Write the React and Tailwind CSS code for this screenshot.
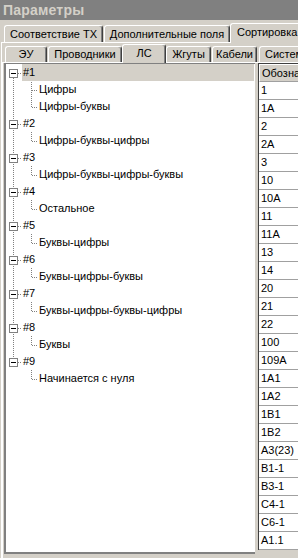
import React from "react";

const groups = [
  { label: "#1", items: ["Цифры", "Цифры-буквы"] },
  { label: "#2", items: ["Цифры-буквы-цифры"] },
  { label: "#3", items: ["Цифры-буквы-цифры-буквы"] },
  { label: "#4", items: ["Остальное"] },
  { label: "#5", items: ["Буквы-цифры"] },
  { label: "#6", items: ["Буквы-цифры-буквы"] },
  { label: "#7", items: ["Буквы-цифры-буквы-цифры"] },
  { label: "#8", items: ["Буквы"] },
  { label: "#9", items: ["Начинается с нуля"] },
];

const codes = [
  "1", "1A", "2", "2A", "3", "10", "10A", "11", "11A", "13", "14", "20", "21",
  "22", "100", "109A", "1A1", "1A2", "1B1", "1B2", "A3(23)", "B1-1", "B3-1",
  "C4-1", "C6-1", "A1.1",
];

const outerTabs = [
  { label: "Соответствие ТХ", cls: "ml-[4px] w-[99px] justify-center" },
  { label: "Дополнительные поля", cls: "ml-[1px] w-[126px] justify-center" },
  { label: "Сортировка", cls: "w-[72px] justify-start pl-[6px]", active: true },
];

const innerTabs = [
  { label: "ЭУ", cls: "ml-[3px] w-[42px] justify-center" },
  { label: "Проводники", cls: "ml-[1px] w-[74px] justify-center" },
  { label: "ЛС", cls: "w-[44px] justify-center", active: true },
  { label: "Жгуты", cls: "w-[45px] justify-center" },
  { label: "Кабели", cls: "ml-[1px] w-[45px] justify-center" },
  { label: "Системы", cls: "ml-[2px] w-[60px] justify-start pl-[5px]" },
];

function buildRows() {
  const rows = [];
  groups.forEach((g, gi) => {
    const last = gi === groups.length - 1;
    rows.push({ kind: "group", label: g.label, first: gi === 0, last, selected: gi === 0 });
    g.items.forEach((it, ii) => {
      rows.push({ kind: "item", label: it, parentLast: last, lastChild: ii === g.items.length - 1 });
    });
  });
  return rows;
}

const DOT = { stroke: "#808080", strokeWidth: 1, strokeDasharray: "1 1" };

function Glyph({ row, index }) {
  // keep the dots on the same pixel grid from row to row
  const phase = (17 * index) % 2;
  if (row.kind === "group") {
    return (
      <svg width="15" height="17" className="shrink-0">
        {!row.first && <line x1="6.5" y1="0" x2="6.5" y2="5" {...DOT} strokeDashoffset={phase} />}
        {!row.last && <line x1="6.5" y1="14" x2="6.5" y2="17" {...DOT} strokeDashoffset={phase} />}
        <line x1="11" y1="9.5" x2="15" y2="9.5" {...DOT} />
        <rect x="2.5" y="5.5" width="8" height="8" fill="#fff" stroke="#808080" />
        <line x1="4" y1="9.5" x2="9" y2="9.5" stroke="#000" />
      </svg>
    );
  }
  return (
    <svg width="31" height="17" className="shrink-0">
      {!row.parentLast && <line x1="6.5" y1="0" x2="6.5" y2="17" {...DOT} strokeDashoffset={phase} />}
      <line x1="24.5" y1="0" x2="24.5" y2={row.lastChild ? 10 : 17} {...DOT} strokeDashoffset={phase} />
      <line x1="25" y1="9.5" x2="31" y2="9.5" {...DOT} />
    </svg>
  );
}

function Tab({ tab, tall, short }) {
  return (
    <div
      className={`${tab.cls} shrink-0 flex items-center bg-[#d4d0c8] border-t border-l border-white border-r border-r-[#404040] rounded-t-[3px] shadow-[inset_-1px_0_0_#808080] whitespace-nowrap overflow-hidden ${
        tab.active ? `${tall} relative z-10 -mb-px` : short
      }`}
    >
      {tab.label}
    </div>
  );
}

export default function App() {
  const rows = buildRows();

  return (
    <div className="w-[298px] h-[558px] overflow-hidden bg-[#d4d0c8] flex flex-col font-['Liberation_Sans',Arial,sans-serif] text-[11px] text-black">
      {/* caption */}
      <div className="h-[20px] shrink-0 bg-[#808080] text-[#d4d0c8] font-bold text-[14px] tracking-[0.2px] leading-[20px] pl-[3px]">
        Параметры
      </div>

      {/* outer tabs */}
      <div className="h-[22px] shrink-0 flex items-end">
        {outerTabs.map((t) => (
          <Tab key={t.label} tab={t} tall="h-[20px] pb-[2px]" short="h-[17px]" />
        ))}
      </div>

      <div className="flex-1 flex flex-col min-h-0 border-t border-l border-white ml-[1px]">
        {/* inner tabs */}
        <div className="h-[19px] shrink-0 flex items-end">
          {innerTabs.map((t) => (
            <Tab key={t.label} tab={t} tall="h-[19px] pb-[2px]" short="h-[16px]" />
          ))}
        </div>

        <div className="flex-1 flex min-h-0 border-t border-l border-white pl-[1px] pb-[4px]">
          {/* tree */}
          <div className="w-[251px] shrink-0 bg-white border-l-2 border-t border-b-2 border-[#808080] overflow-hidden">
            {rows.map((row, i) => (
              <div key={i} className="h-[17px] flex items-stretch pl-[1px] pr-[1px]">
                <Glyph row={row} index={i} />
                <div
                  className={`leading-[17px] pl-[1px] whitespace-nowrap ${
                    row.selected ? "flex-1 bg-[#d4d0c8]" : ""
                  }`}
                >
                  {row.label}
                </div>
              </div>
            ))}
          </div>

          {/* splitter */}
          <div className="w-[3px] shrink-0" />

          {/* code list */}
          <div className="flex-1 min-w-0 overflow-hidden self-start border-l border-t border-[#404040]">
            <div className="w-[80px] bg-white">
              <div className="h-[18px] bg-[#d4d0c8] border-t border-l border-white border-b border-b-[#a0a0a0] leading-[16px] pl-[2px] whitespace-nowrap">
                Обозначение
              </div>
              {codes.map((c) => (
                <div
                  key={c}
                  className="h-[18px] border-b border-[#a0a0a0] leading-[17px] pl-[2px] whitespace-nowrap"
                >
                  {c}
                </div>
              ))}
            </div>
          </div>
        </div>
      </div>
    </div>
  );
}
